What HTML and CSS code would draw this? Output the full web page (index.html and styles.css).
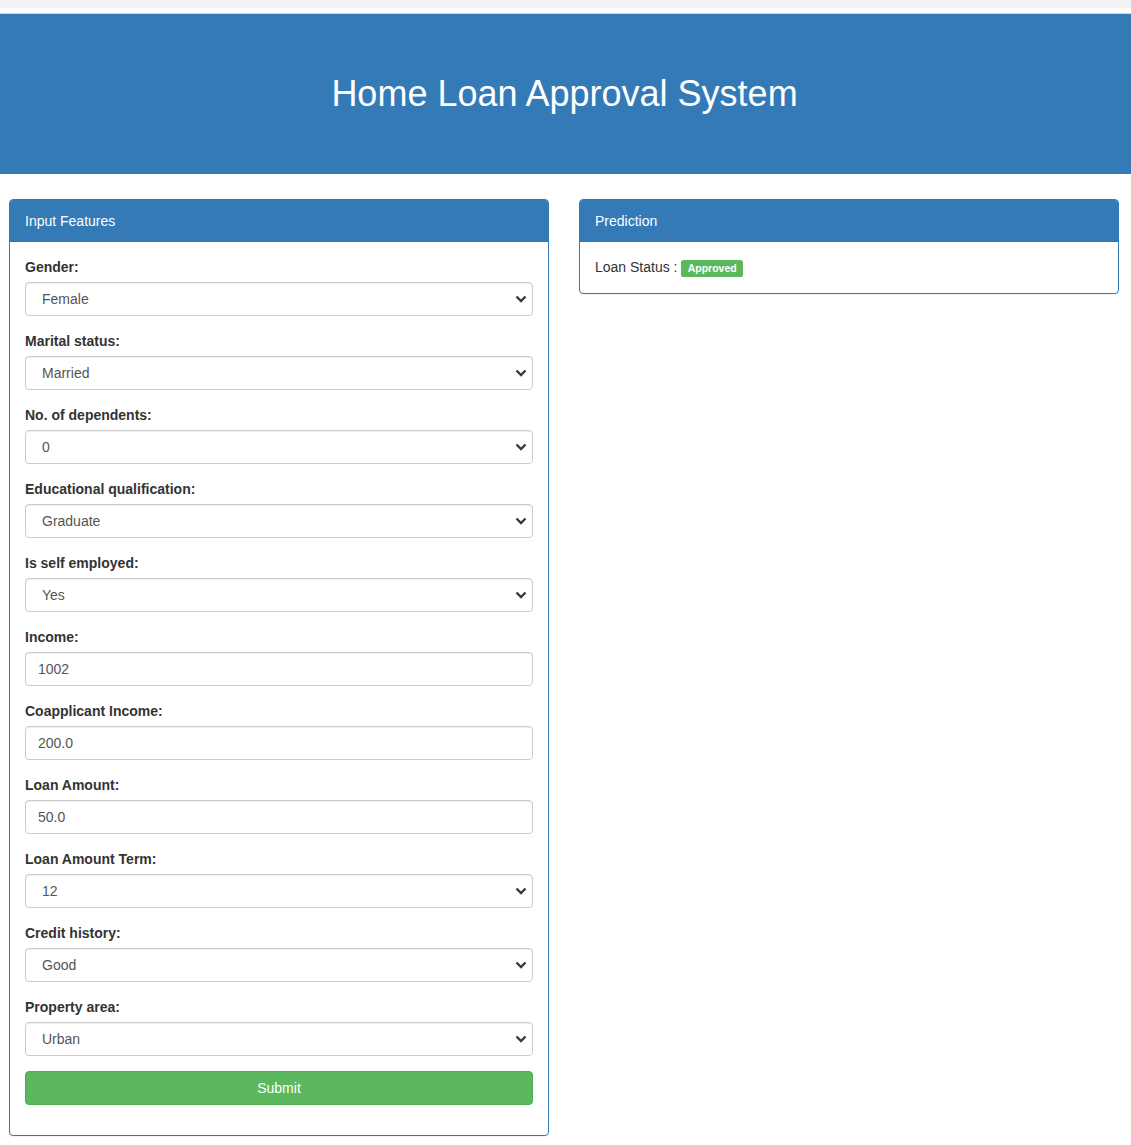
FILE: index.html
```html
<!DOCTYPE html>
<html lang="en">
<head>
<meta charset="utf-8">
<title>Home Loan Approval System</title>
<link rel="stylesheet" href="styles.css">
</head>
<body>
<div class="topstrip"></div>
<div class="topgap"></div>
<header class="banner">
  <h1 class="banner-title">Home Loan Approval System</h1>
</header>
<main class="row">
  <section class="panel">
    <div class="panel-heading">Input Features</div>
    <form class="panel-body">
      <div class="form-group">
        <label class="lbl">Gender:</label>
        <div class="select-wrap"><select class="form-control sel"><option>Female</option><option>Male</option></select><svg class="chev" viewBox="0 0 12 8" width="12" height="8"><path d="M1.5 1.5 L6 6 L10.5 1.5" fill="none" stroke="#3a3a3a" stroke-width="2.4"/></svg></div>
      </div>
      <div class="form-group">
        <label class="lbl">Marital status:</label>
        <div class="select-wrap"><select class="form-control sel"><option>Married</option><option>Unmarried</option></select><svg class="chev" viewBox="0 0 12 8" width="12" height="8"><path d="M1.5 1.5 L6 6 L10.5 1.5" fill="none" stroke="#3a3a3a" stroke-width="2.4"/></svg></div>
      </div>
      <div class="form-group">
        <label class="lbl">No. of dependents:</label>
        <div class="select-wrap"><select class="form-control sel"><option>0</option><option>1</option><option>2</option><option>3+</option></select><svg class="chev" viewBox="0 0 12 8" width="12" height="8"><path d="M1.5 1.5 L6 6 L10.5 1.5" fill="none" stroke="#3a3a3a" stroke-width="2.4"/></svg></div>
      </div>
      <div class="form-group">
        <label class="lbl">Educational qualification:</label>
        <div class="select-wrap"><select class="form-control sel"><option>Graduate</option><option>Not Graduate</option></select><svg class="chev" viewBox="0 0 12 8" width="12" height="8"><path d="M1.5 1.5 L6 6 L10.5 1.5" fill="none" stroke="#3a3a3a" stroke-width="2.4"/></svg></div>
      </div>
      <div class="form-group">
        <label class="lbl">Is self employed:</label>
        <div class="select-wrap"><select class="form-control sel"><option>Yes</option><option>No</option></select><svg class="chev" viewBox="0 0 12 8" width="12" height="8"><path d="M1.5 1.5 L6 6 L10.5 1.5" fill="none" stroke="#3a3a3a" stroke-width="2.4"/></svg></div>
      </div>
      <div class="form-group">
        <label class="lbl">Income:</label>
        <input class="form-control" type="text" value="1002">
      </div>
      <div class="form-group">
        <label class="lbl">Coapplicant Income:</label>
        <input class="form-control" type="text" value="200.0">
      </div>
      <div class="form-group">
        <label class="lbl">Loan Amount:</label>
        <input class="form-control" type="text" value="50.0">
      </div>
      <div class="form-group">
        <label class="lbl">Loan Amount Term:</label>
        <div class="select-wrap"><select class="form-control sel"><option>12</option><option>36</option><option>60</option></select><svg class="chev" viewBox="0 0 12 8" width="12" height="8"><path d="M1.5 1.5 L6 6 L10.5 1.5" fill="none" stroke="#3a3a3a" stroke-width="2.4"/></svg></div>
      </div>
      <div class="form-group">
        <label class="lbl">Credit history:</label>
        <div class="select-wrap"><select class="form-control sel"><option>Good</option><option>Bad</option></select><svg class="chev" viewBox="0 0 12 8" width="12" height="8"><path d="M1.5 1.5 L6 6 L10.5 1.5" fill="none" stroke="#3a3a3a" stroke-width="2.4"/></svg></div>
      </div>
      <div class="form-group">
        <label class="lbl">Property area:</label>
        <div class="select-wrap"><select class="form-control sel"><option>Urban</option><option>Semiurban</option><option>Rural</option></select><svg class="chev" viewBox="0 0 12 8" width="12" height="8"><path d="M1.5 1.5 L6 6 L10.5 1.5" fill="none" stroke="#3a3a3a" stroke-width="2.4"/></svg></div>
      </div>
      <div class="form-group">
        <button type="button" class="btn-success">Submit</button>
      </div>
    </form>
  </section>
  <section class="panel panel-short">
    <div class="panel-heading">Prediction</div>
    <div class="panel-body panel-body-status">
      <p class="status">Loan Status : <span class="label-success">Approved</span></p>
    </div>
  </section>
</main>
</body>
</html>
```

FILE: styles.css
```css
* { box-sizing: border-box; }
html, body { margin: 0; padding: 0; }
body {
  font-family: "Liberation Sans", Arial, Helvetica, sans-serif;
  font-size: 14px;
  line-height: 20px;
  color: #333;
  background: #fff;
}
.topstrip { height: 8px; background: #f1f2f4; }
.topgap { height: 6px; background: #fff; border-bottom: 1px solid #d9dbde; }
.banner {
  height: 160px;
  background: #337ab7;
  display: flex;
  align-items: center;
  justify-content: center;
}
.banner-title {
  margin: 0 0 0 -2px;
  font-weight: 400;
  font-size: 36px;
  line-height: 40px;
  color: #fff;
}
.row {
  display: flex;
  align-items: flex-start;
  gap: 30px;
  padding: 25px 12px 9px 9px;
}
.panel {
  width: 540px;
  border: 1px solid #337ab7;
  border-radius: 4px;
  background: #fff;
  box-shadow: 0 1px 1px rgba(0,0,0,.05);
}
.panel-heading {
  background: #337ab7;
  color: #fff;
  padding: 11px 15px 11px;
  border-radius: 3px 3px 0 0;
  line-height: 20px;
}
.panel-body { padding: 15px; display: block; }
.panel-body-status { padding-bottom: 16px; }
.form-group { margin-bottom: 15px; }
.lbl {
  display: block;
  font-weight: 700;
  margin-bottom: 5px;
  max-width: 100%;
}
.form-control {
  display: block;
  width: 100%;
  height: 34px;
  padding: 6px 12px;
  font-family: inherit;
  font-size: 14px;
  line-height: 20px;
  color: #555;
  background-color: #fff;
  border: 1px solid #ccc;
  border-radius: 4px;
  box-shadow: inset 0 1px 1px rgba(0,0,0,.075);
  margin: 0;
}
.select-wrap { position: relative; }
.sel {
  -webkit-appearance: none;
  appearance: none;
  padding-left: 16px;
  padding-right: 30px;
}
.chev {
  position: absolute;
  right: 6px;
  top: 13px;
  pointer-events: none;
}
.btn-success {
  display: block;
  width: 100%;
  height: 34px;
  padding: 6px 12px;
  font-family: inherit;
  font-size: 14px;
  line-height: 20px;
  color: #fff;
  background: #5cb85c;
  border: 1px solid #4cae4c;
  border-radius: 4px;
  cursor: pointer;
}
.status { margin: 0; }
.label-success {
  display: inline;
  padding: .2em .6em .3em;
  font-size: 75%;
  font-weight: 700;
  line-height: 1;
  color: #fff;
  background: #5cb85c;
  border-radius: .25em;
  white-space: nowrap;
  vertical-align: baseline;
  text-align: center;
}
```
